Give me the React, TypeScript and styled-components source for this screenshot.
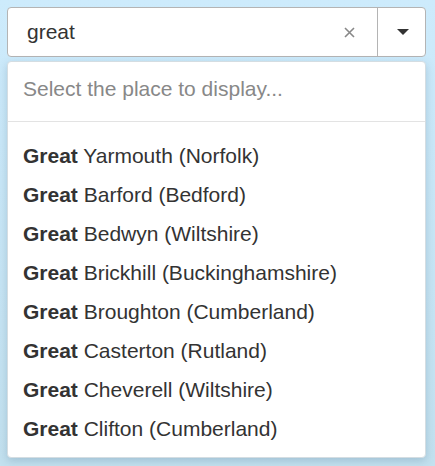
import React from "react";
import styled, { createGlobalStyle } from "styled-components";

const Global = createGlobalStyle`
  html, body { margin: 0; padding: 0; }
  body {
    min-height: 466px;
    background: linear-gradient(180deg, #cdebfc 0%, #c3e1ef 100%);
    font-family: "Liberation Sans", Arial, sans-serif;
  }
`;

const Page = styled.div`
  padding: 7px 9px 0 7px;
  display: flex;
  flex-direction: column;
  gap: 4px;
`;

const Control = styled.div`
  height: 50px;
  box-sizing: border-box;
  border: 1px solid #b4b4b4;
  border-radius: 4px;
  background: #fff;
  display: flex;
  align-items: stretch;
`;

const Value = styled.div`
  flex: 1;
  display: flex;
  align-items: center;
  padding-left: 19px;
  font-size: 21px;
  color: #333;
`;

const Clear = styled.div`
  width: 56px;
  display: flex;
  align-items: center;
  justify-content: center;
  color: #888;
`;

const Toggle = styled.div`
  width: 47px;
  border-left: 1px solid #b4b4b4;
  display: flex;
  align-items: center;
  justify-content: center;
`;

const Caret = styled.div`
  width: 0;
  height: 0;
  border-left: 6px solid transparent;
  border-right: 6px solid transparent;
  border-top: 6px solid #333;
  margin-left: 2px;
`;

const Menu = styled.div`
  height: 397px;
  box-sizing: border-box;
  background: #fff;
  border: 1px solid #d4dde2;
  border-radius: 4px;
  box-shadow: 0 3px 8px rgba(60, 100, 130, 0.25);
  display: flex;
  flex-direction: column;
`;

const Placeholder = styled.div`
  height: 60px;
  box-sizing: border-box;
  border-bottom: 1px solid #e3e3e3;
  display: flex;
  align-items: center;
  padding: 0 0 5px 15px;
  font-size: 21px;
  color: #888;
`;

const List = styled.div`
  padding: 14px 0 0;
  display: flex;
  flex-direction: column;
`;

const Item = styled.div`
  height: 39px;
  line-height: 39px;
  padding-left: 15px;
  font-size: 21px;
  color: #333;
  b { font-weight: bold; }
`;

const places = [
  "Yarmouth (Norfolk)",
  "Barford (Bedford)",
  "Bedwyn (Wiltshire)",
  "Brickhill (Buckinghamshire)",
  "Broughton (Cumberland)",
  "Casterton (Rutland)",
  "Cheverell (Wiltshire)",
  "Clifton (Cumberland)",
];

export default function App() {
  return (
    <>
      <Global />
      <Page>
        <Control>
          <Value>great</Value>
          <Clear>
            <svg width="11" height="11" viewBox="0 0 11 11">
              <path d="M1 1L10 10M10 1L1 10" stroke="#888" strokeWidth="1.6" />
            </svg>
          </Clear>
          <Toggle>
            <Caret />
          </Toggle>
        </Control>
        <Menu>
          <Placeholder>Select the place to display...</Placeholder>
          <List>
            {places.map((p) => (
              <Item key={p}>
                <b>Great</b> {p}
              </Item>
            ))}
          </List>
        </Menu>
      </Page>
    </>
  );
}
